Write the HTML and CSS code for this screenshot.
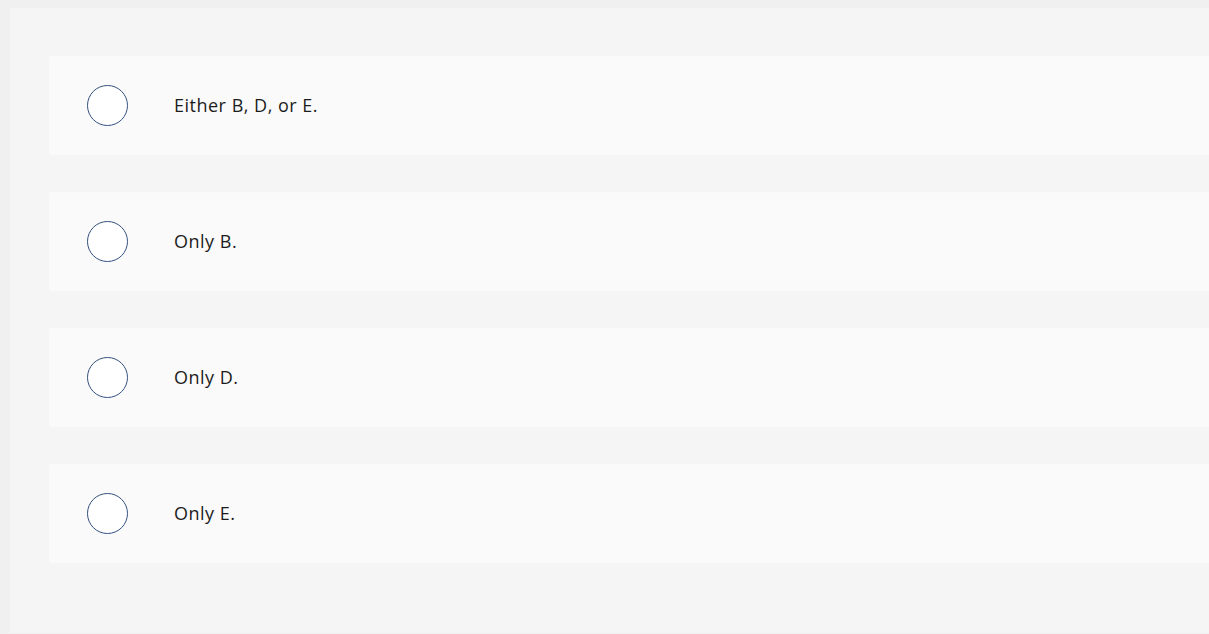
FILE: index.html
```html
<!DOCTYPE html>
<html lang="en">
<head>
<meta charset="UTF-8">
<meta name="viewport" content="width=device-width, initial-scale=1.0">
<title>Question</title>
<link rel="stylesheet" href="styles.css">
</head>
<body>
<div class="painel">
    <div class="opcoes">
        <label class="opcao">
            <span class="radio"></span>
            <span class="opcao-texto">Either B, D, or E.</span>
        </label>
        <label class="opcao">
            <span class="radio"></span>
            <span class="opcao-texto">Only B.</span>
        </label>
        <label class="opcao">
            <span class="radio"></span>
            <span class="opcao-texto">Only D.</span>
        </label>
        <label class="opcao">
            <span class="radio"></span>
            <span class="opcao-texto">Only E.</span>
        </label>
    </div>
</div>
</body>
</html>
```

FILE: styles.css
```css
html, body {
    margin: 0;
    padding: 0;
    overflow: hidden;
}
body {
    font-family: "Open Sans", Lato, sans-serif;
    background-color: #f0f0f0;
    padding: 8px 0 1px 10px;
    height: 634px;
    box-sizing: border-box;
}
.painel {
    background-color: #f5f5f5;
    width: 1240px;
    height: 625px;
    padding: 48px 0 0 39px;
    box-sizing: border-box;
}
.opcoes {
    display: flex;
    flex-direction: column;
    gap: 37px;
}
.opcao {
    display: flex;
    align-items: center;
    height: 99px;
    background-color: #fafafa;
    border-radius: 4px;
    padding-left: 38px;
    cursor: pointer;
}
.radio {
    width: 39px;
    height: 39px;
    border: 1.5px solid #34507f;
    border-radius: 50%;
    background-color: #fff;
    flex-shrink: 0;
}
.opcao-texto {
    margin-left: 46px;
    margin-bottom: 2px;
    font-size: 18px;
    letter-spacing: 0.5px;
    color: #1c1c1c;
}
```
